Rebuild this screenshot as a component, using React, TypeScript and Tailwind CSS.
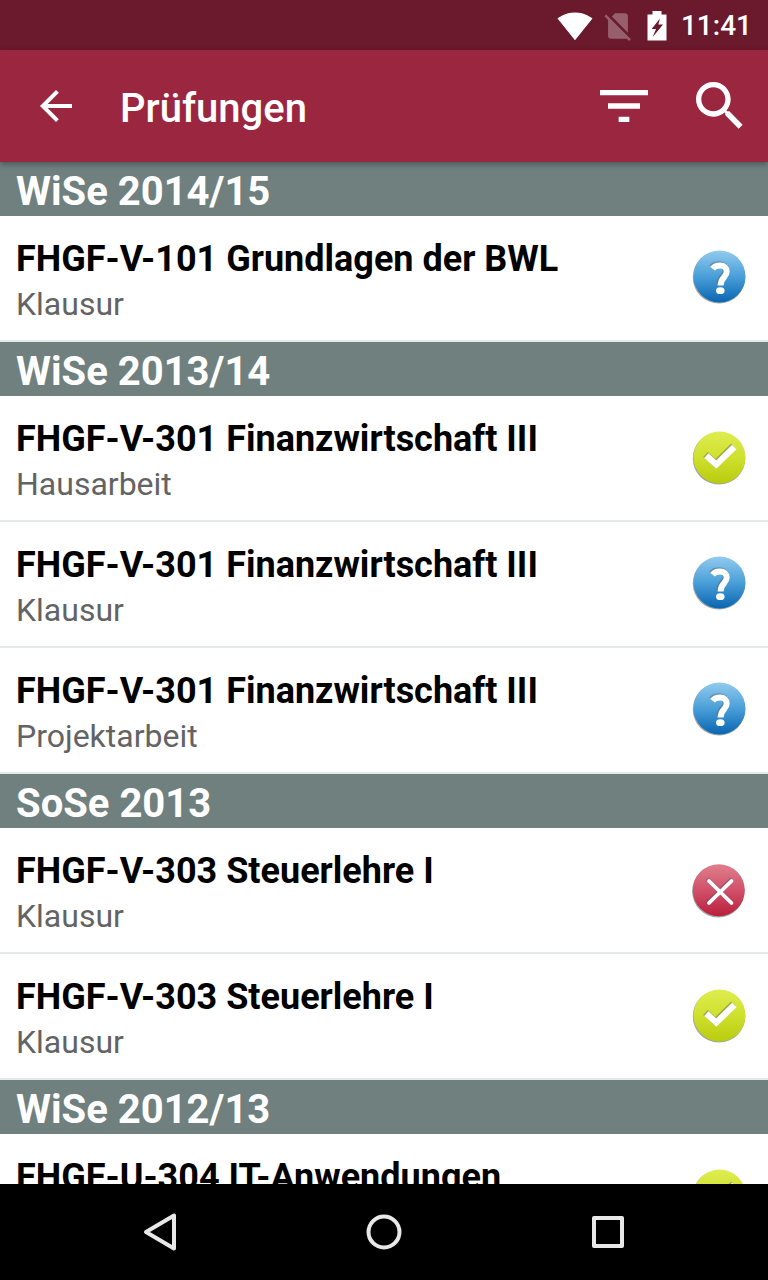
import React from "react";

type Status = "open" | "passed" | "failed";
type Exam = { title: string; kind: string; status: Status };
type Term = { name: string; exams: Exam[] };

const terms: Term[] = [
  {
    name: "WiSe 2014/15",
    exams: [{ title: "FHGF-V-101 Grundlagen der BWL", kind: "Klausur", status: "open" }],
  },
  {
    name: "WiSe 2013/14",
    exams: [
      { title: "FHGF-V-301 Finanzwirtschaft III", kind: "Hausarbeit", status: "passed" },
      { title: "FHGF-V-301 Finanzwirtschaft III", kind: "Klausur", status: "open" },
      { title: "FHGF-V-301 Finanzwirtschaft III", kind: "Projektarbeit", status: "open" },
    ],
  },
  {
    name: "SoSe 2013",
    exams: [
      { title: "FHGF-V-303 Steuerlehre I", kind: "Klausur", status: "failed" },
      { title: "FHGF-V-303 Steuerlehre I", kind: "Klausur", status: "passed" },
    ],
  },
  {
    name: "WiSe 2012/13",
    exams: [{ title: "FHGF-U-304 IT-Anwendungen", kind: "Klausur", status: "passed" }],
  },
];

const gradients: Record<Status, [string, string, string]> = {
  open: ["#92cbef", "#4a9fd8", "#0a66b2"],
  passed: ["#deed50", "#cfe02e", "#b9cc0c"],
  failed: ["#de7f8c", "#d2506a", "#b81f3c"],
};

const marks: Record<Status, { d: string; width: number }> = {
  open: { d: "M20.5 18.7C22.3 16.4 25 15.5 28 15.5C32.3 15.5 34.7 17.9 34.7 21.4C34.7 27.4 28.6 27.2 28.6 35.4", width: 6 },
  passed: { d: "M14.3 25.6L24.2 34.6L42.3 17", width: 6.2 },
  failed: { d: "M17 19L39.5 41M39.5 19L17 41", width: 3.8 },
};

const centers: Record<Status, [number, number]> = {
  open: [27.5, 26.7],
  passed: [27.5, 27.7],
  failed: [26.8, 28.5],
};

function StatusIcon({ status }: { status: Status }) {
  const [top, middle, bottom] = gradients[status];
  const [cx, cy] = centers[status];
  const mark = marks[status];
  const id = React.useId();
  const cap = status === "failed" ? "round" : "butt";
  return (
    <svg className="size-14 shrink-0" viewBox="0 0 56 56" fill="none" aria-hidden="true">
      <defs>
        <linearGradient id={id} x1="0" y1="0" x2="0" y2="1">
          <stop offset="0" stopColor={top} />
          <stop offset="0.5" stopColor={middle} />
          <stop offset="1" stopColor={bottom} />
        </linearGradient>
      </defs>
      <circle cx={cx - 0.5} cy={cy + 0.7} r="26.2" fill="#5f6a66" opacity="0.6" />
      <circle cx={cx} cy={cy - 0.3} r="26" fill={`url(#${id})`} />
      <path d={mark.d} transform="translate(-0.8 -1)" stroke="#56606a" strokeOpacity="0.45" strokeWidth={mark.width + 0.6} strokeLinecap={cap} />
      <path d={mark.d} stroke="#fff" strokeWidth={mark.width} strokeLinecap={cap} />
      {status === "open" && <ellipse cx="28.3" cy="40.7" rx="4.3" ry="3.4" fill="#fff" />}
    </svg>
  );
}

function StatusBar() {
  return (
    <div className="flex h-[50px] shrink-0 items-center justify-end bg-[#6a1a2c] pt-0.5 pr-4 text-white">
      <svg className="mr-2 size-9" viewBox="0 0 24 24" fill="currentColor" aria-hidden="true">
        <path d="M12.01 21.49L23.64 7c-.45-.34-4.93-4-11.64-4C5.28 3 .81 6.66.36 7l11.63 14.49.01.01.01-.01z" />
      </svg>
      <svg className="mr-3 size-[34px] opacity-30" viewBox="0 0 24 24" fill="currentColor" aria-hidden="true">
        <path d="M18.99 5c0-1.1-.89-2-1.99-2h-7L7.66 5.34 19 16.68 18.99 5zM3.65 3.88L2.38 5.15 5 7.77V19c0 1.1.9 2 2 2h10.01c.35 0 .67-.1.96-.26l1.88 1.88 1.27-1.27L3.65 3.88z" />
      </svg>
      <svg className="mr-3.5 h-[30px] w-5" viewBox="0 0 20 30" fill="currentColor" fillRule="evenodd" aria-hidden="true">
        <path d="M5.5 0h9v3.5h5V29.5H.5V3.5h5zM13 7.5L4.6 18h4.4L5.6 26.2 16 13.5h-4.7z" />
      </svg>
      <span className="text-[28px] leading-8 font-medium">11:41</span>
    </div>
  );
}

function AppBar() {
  return (
    <header className="relative z-10 flex h-28 shrink-0 items-center bg-[#9b263f] pr-4 pl-8 text-white shadow-[0_2px_6px_rgba(0,0,0,0.35)]">
      <button type="button" aria-label="Zurück" className="mr-10">
        <svg className="size-12" viewBox="0 0 24 24" fill="currentColor">
          <path d="M20 11H7.83l5.59-5.59L12 4l-8 8 8 8 1.41-1.41L7.83 13H20v-2z" />
        </svg>
      </button>
      <h1 className="flex-1 pt-1.5 text-[40px] leading-12 font-medium">Prüfungen</h1>
      <button type="button" aria-label="Filtern" className="mr-8">
        <svg className="size-16" viewBox="0 0 24 24" fill="currentColor">
          <path d="M10 18h4v-2h-4v2zM3 6v2h18V6H3zm3 7h12v-2H6v2z" />
        </svg>
      </button>
      <button type="button" aria-label="Suchen">
        <svg className="size-16" viewBox="0 0 24 24" fill="currentColor">
          <path d="M15.5 14h-.79l-.28-.27C15.41 12.59 16 11.11 16 9.5 16 5.91 13.09 3 9.5 3S3 5.91 3 9.5 5.91 16 9.5 16c1.61 0 3.09-.59 4.23-1.57l.27.28v.79l5 4.99L20.49 19l-4.99-5zm-6 0C7.01 14 5 11.99 5 9.5S7.01 5 9.5 5 14 7.01 14 9.5 11.99 14 9.5 14z" />
        </svg>
      </button>
    </header>
  );
}

function ExamRow({ exam }: { exam: Exam }) {
  return (
    <li className="flex h-[126px] items-center border-b-2 border-[#e4e8e7] pr-5 pl-4">
      <div className="min-w-0 flex-1 pt-2">
        <h3 className="text-[36px] leading-[44px] font-bold text-black">{exam.title}</h3>
        <p className="text-[32px] leading-[46px] text-[#636363]">{exam.kind}</p>
      </div>
      <StatusIcon status={exam.status} />
    </li>
  );
}

function NavBar() {
  const button = "flex flex-1 items-center justify-center";
  return (
    <nav className="flex h-24 shrink-0 bg-black px-12 text-[#e8e8e8]">
      <button type="button" aria-label="Zurück" className={button}>
        <svg className="size-10" viewBox="0 0 40 40" fill="none" stroke="currentColor" strokeWidth="4" strokeLinejoin="round">
          <path d="M34 3.5V36.5L6 20z" />
        </svg>
      </button>
      <button type="button" aria-label="Startbildschirm" className={button}>
        <svg className="size-10" viewBox="0 0 40 40" fill="none" stroke="currentColor" strokeWidth="4">
          <circle cx="20" cy="20" r="15.5" />
        </svg>
      </button>
      <button type="button" aria-label="Übersicht" className={button}>
        <svg className="size-10" viewBox="0 0 40 40" fill="none" stroke="currentColor" strokeWidth="4" strokeLinejoin="round">
          <path d="M6 6H34V34H6z" />
        </svg>
      </button>
    </nav>
  );
}

export default function App() {
  return (
    <div className="flex h-screen flex-col bg-white font-[Roboto,sans-serif]">
      <StatusBar />
      <AppBar />
      <main className="min-h-0 flex-1 overflow-x-hidden overflow-y-auto [scrollbar-width:none]">
        {terms.map((term) => (
          <section key={term.name}>
            <h2 className="bg-[#6f807f] px-4 pt-1.5 text-[40px] leading-12 font-bold text-white">{term.name}</h2>
            <ul>
              {term.exams.map((exam, index) => (
                <ExamRow key={index} exam={exam} />
              ))}
            </ul>
          </section>
        ))}
      </main>
      <NavBar />
    </div>
  );
}
